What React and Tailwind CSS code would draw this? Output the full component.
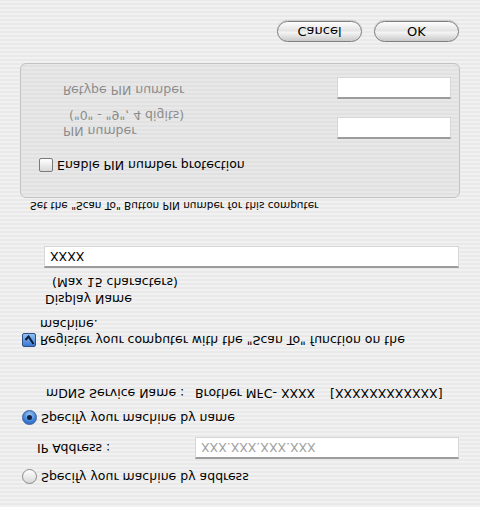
import React from 'react'

const stripes = 'bg-[repeating-linear-gradient(to_bottom,#f1f1f1_0px,#f1f1f1_2px,#e9e9e9_2px,#e9e9e9_4px)]'

function Field({ className = '', children }) {
  return (
    <div className={`flex h-[22px] items-center bg-white border border-[#d6d6d6] border-t-2 border-t-[#9c9c9c] pl-[5px] ${className}`}>
      {children}
    </div>
  )
}

function Radio({ on }) {
  if (on) {
    return (
      <span className="flex h-[15px] w-[15px] shrink-0 items-center justify-center rounded-full border border-[#3a5f9c] bg-[radial-gradient(circle_at_50%_70%,#9cc6f5,#3d7fd6_60%,#2a5db0)]">
        <span className="h-[5px] w-[5px] rounded-full bg-[#10223f]" />
      </span>
    )
  }
  return (
    <span className="h-[15px] w-[15px] shrink-0 rounded-full border border-[#8a8a8a] bg-[linear-gradient(to_bottom,#d8d8d8,#ffffff)]" />
  )
}

function Check({ on }) {
  if (on) {
    return (
      <span className="flex h-[14px] w-[14px] shrink-0 items-center justify-center rounded-[2px] border border-[#2f4f86] bg-[linear-gradient(to_bottom,#3a78d0,#8fc0f4)]">
        <svg width="11" height="10" viewBox="0 0 11 10">
          <path d="M1.5 5 L4.5 8.5 L9.5 1" fill="none" stroke="#0c1a33" strokeWidth="2" />
        </svg>
      </span>
    )
  }
  return <span className="h-[14px] w-[14px] shrink-0 rounded-[2px] border border-[#7a7a7a] bg-[linear-gradient(to_bottom,#d9d9d9,#ffffff)]" />
}

function Button({ children }) {
  return (
    <button className="flex h-[21px] w-[85px] items-center justify-center rounded-full border border-[#7e7e7e] bg-[linear-gradient(to_bottom,#c9c9c9,#f4f4f4_45%,#e4e4e4_55%,#fdfdfd)] text-[13px] text-black shadow-[0_1px_1px_rgba(0,0,0,0.15)]">
      {children}
    </button>
  )
}

export default function App() {
  return (
    <div className={`h-[507px] w-[480px] overflow-hidden -scale-y-100 ${stripes} font-['DejaVu_Sans',sans-serif] text-[12.5px] leading-[16px] text-black`}>
      <div className="flex flex-col pt-[22px]">
        <label className="flex h-[16px] items-center gap-[4px] pl-[22px]">
          <Radio />
          <span>Specify your machine by address</span>
        </label>

        <div className="mt-[10px] flex items-center pl-[37px] pr-[21px]">
          <span className="w-[158px]">IP Address :</span>
          <Field className="flex-1 text-[#a0a0a0]">XXX.XXX.XXX.XXX</Field>
        </div>

        <label className="mt-[11px] flex h-[16px] items-center gap-[4px] pl-[22px]">
          <Radio on />
          <span>Specify your machine by name</span>
        </label>

        <div className="mt-[9px] flex h-[16px] items-center pl-[46px]">
          <span className="w-[149px]">mDNS Service Name :</span>
          <span className="w-[135px]">Brother MFC- XXXX</span>
          <span>[XXXXXXXXXXXX]</span>
        </div>

        <div className="mt-[37px] flex items-start gap-[4px] pl-[22px]">
          <span className="mt-[1px]"><Check on /></span>
          <span>Register your computer with the "Scan To" function on the<br />machine.</span>
        </div>

        <span className="mt-[9px] pl-[45px]">Display Name</span>
        <span className="mt-[1px] pl-[52px]">(Max 15 characters)</span>
        <div className="mt-[6px] pl-[44px] pr-[21px]">
          <Field>XXXX</Field>
        </div>

        <span className="mt-[33px] h-[14px] pl-[30px] text-[10.5px] leading-[14px]">Set the "Scan To" Button PIN number for this computer</span>

        <div className="mx-[20px] mt-[1px] h-[135px] rounded-[6px] border border-[#c2c2c2] bg-[repeating-linear-gradient(to_bottom,#e8e8e8_0px,#e8e8e8_2px,#e1e1e1_2px,#e1e1e1_4px)] pl-[18px] pr-[8px] pt-[24px] text-[#8c8c8c]">
          <label className="flex h-[16px] items-center gap-[4px] text-black">
            <Check />
            <span>Enable PIN number protection</span>
          </label>
          <div className="mt-[18px] flex justify-between">
            <div className="flex flex-col pl-[24px]">
              <span>PIN number</span>
              <span className="pl-[6px]">("0" - "9",  4 digits)</span>
            </div>
            <Field className="w-[114px]" />
          </div>
          <div className="mt-[8px] flex justify-between">
            <span className="mt-[1px] pl-[24px]">Retype PIN number</span>
            <Field className="w-[114px]" />
          </div>
        </div>

        <div className="mt-[21px] flex justify-end gap-[12px] pr-[21px]">
          <Button>Cancel</Button>
          <Button>OK</Button>
        </div>
      </div>
    </div>
  )
}
